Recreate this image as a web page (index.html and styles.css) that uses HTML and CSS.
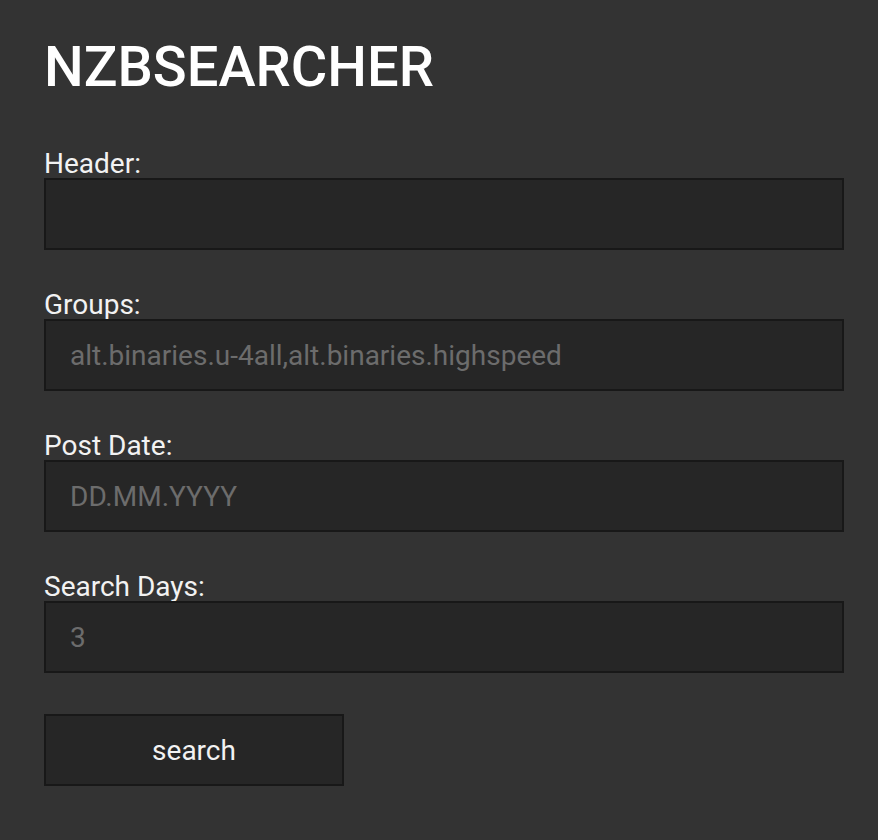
FILE: index.html
```html
<!DOCTYPE html>
<html>
<head>
<meta charset="utf-8">
<link rel="stylesheet" href="styles.css">
</head>
<body>
<main class="page">
  <h1 class="title">NZBSEARCHER</h1>
  <form class="form">
    <div class="field">
      <label class="label">Header:</label>
      <input class="input" type="text">
    </div>
    <div class="field">
      <label class="label">Groups:</label>
      <input class="input" type="text" placeholder="alt.binaries.u-4all,alt.binaries.highspeed">
    </div>
    <div class="field">
      <label class="label">Post Date:</label>
      <input class="input" type="text" placeholder="DD.MM.YYYY">
    </div>
    <div class="field">
      <label class="label">Search Days:</label>
      <input class="input" type="text" placeholder="3">
    </div>
    <button class="button" type="button">search</button>
  </form>
</main>
</body>
</html>
```
FILE: styles.css
```css
html, body {
  margin: 0;
  padding: 0;
  background: #333333;
  font-family: Roboto, "Noto Sans", sans-serif;
}
.page {
  padding: 32px 34px 0 44px;
}
.title {
  margin: 0;
  font-size: 56px;
  font-weight: 500;
  line-height: 70px;
  color: #ffffff;
}
.form {
  display: flex;
  flex-direction: column;
  gap: 40px;
  margin-top: 47px;
}
.field {
  display: flex;
  flex-direction: column;
}
.label {
  font-size: 28px;
  line-height: 29px;
  color: #f2f2f2;
}
.input {
  box-sizing: border-box;
  width: 800px;
  height: 72px;
  margin: 0;
  padding: 0 24px;
  background: #262626;
  border: 2px solid #181818;
  font-family: Roboto, "Noto Sans", sans-serif;
  font-size: 28px;
  color: #e0e0e0;
  outline: none;
}
.input::placeholder {
  color: #6c6c6c;
}
.button {
  box-sizing: border-box;
  width: 300px;
  height: 72px;
  margin-top: 1px;
  background: #262626;
  border: 2px solid #181818;
  font-family: Roboto, "Noto Sans", sans-serif;
  font-size: 28px;
  color: #f2f2f2;
  cursor: pointer;
}
```
